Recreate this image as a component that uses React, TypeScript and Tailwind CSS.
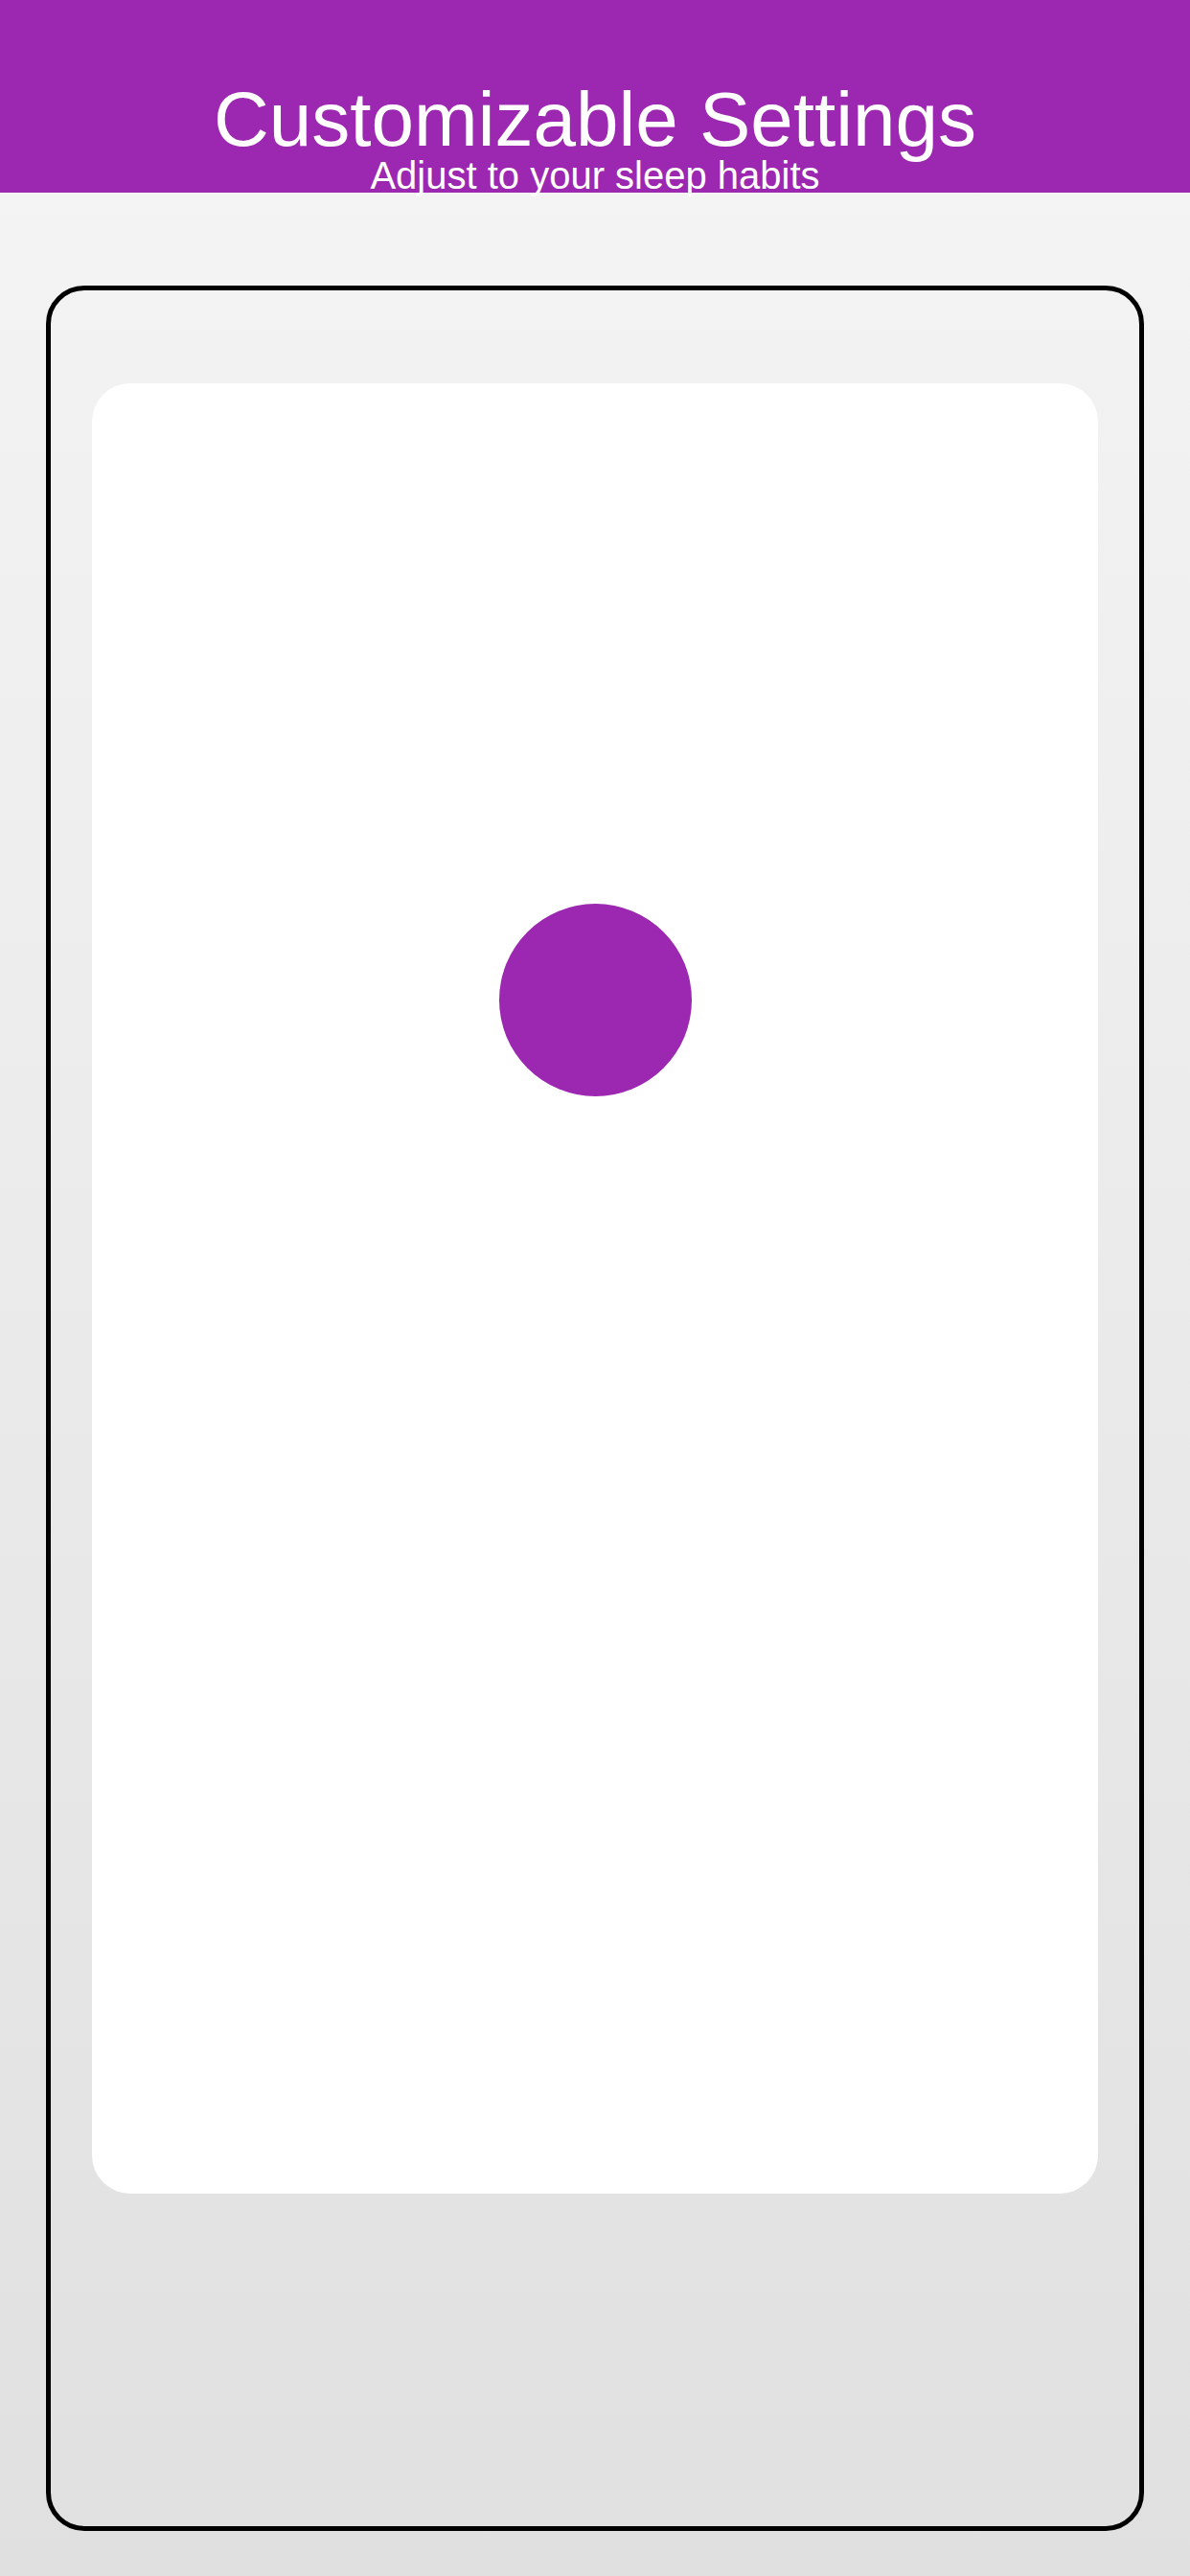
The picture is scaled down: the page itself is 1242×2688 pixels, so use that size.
import React from 'react';

const PURPLE = '#9c27b0';

export default function App() {
  return (
    <div
      className="relative min-h-[2688px] w-full bg-linear-to-b from-[#f5f5f5] to-[#e0e0e0] font-['Liberation_Sans',Arial,sans-serif]"
    >
      {/* Header band — subtitle descenders spill just past the bottom edge */}
      <header
        className="flex h-[201px] flex-col items-center pt-[87px] text-white"
        style={{ backgroundColor: PURPLE }}
      >
        <h1 className="text-[80px] font-normal leading-[76px] tracking-normal">
          Customizable Settings
        </h1>
        <p className="text-[40px] leading-none">Adjust to your sleep habits</p>
      </header>

      {/* Device frame */}
      <main className="px-[48px] pt-[97px]">
        <div className="h-[2343px] rounded-[40px] border-[5px] border-black px-[43px] pt-[97px]">
          <div className="flex h-[1889px] flex-col items-center rounded-[40px] bg-white pt-[543px]">
            <div className="h-[201px] w-[201px] rounded-full bg-[#9c27b0]" />
          </div>
        </div>
      </main>
    </div>
  );
}
